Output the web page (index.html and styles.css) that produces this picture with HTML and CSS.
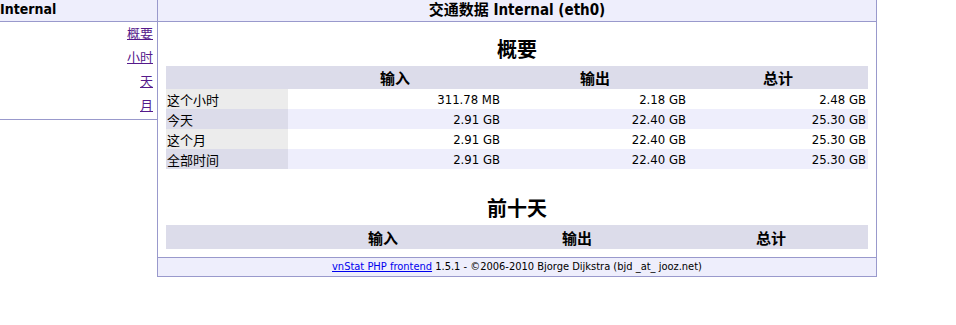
FILE: index.html
```
<!DOCTYPE html>
<html lang="zh-CN">
<head>
  <meta charset="UTF-8" />
  <title>vnStat - 交通数据 Internal (eth0)</title>
  <link rel="stylesheet" href="styles.css">
</head>
<body>
  <div id="wrap">
    <div id="sidebar">
      <div class="iface">Internal</div>
      <ul class="nav">
        <li><a href="#">概要</a></li>
        <li><a href="#">小时</a></li>
        <li><a href="#">天</a></li>
        <li><a href="#">月</a></li>
      </ul>
    </div>

    <div id="main">
      <div class="title">交通数据 Internal (eth0)</div>

      <div class="content">
        <h2>概要</h2>
        <table class="summary">
          <tr>
            <th class="corner"></th>
            <th class="c1">输入</th>
            <th class="c2">输出</th>
            <th class="c3">总计</th>
          </tr>
          <tr class="odd">
            <td class="label">这个小时</td>
            <td class="num">311.78 MB</td>
            <td class="num">2.18 GB</td>
            <td class="num">2.48 GB</td>
          </tr>
          <tr class="even">
            <td class="label">今天</td>
            <td class="num">2.91 GB</td>
            <td class="num">22.40 GB</td>
            <td class="num">25.30 GB</td>
          </tr>
          <tr class="odd">
            <td class="label">这个月</td>
            <td class="num">2.91 GB</td>
            <td class="num">22.40 GB</td>
            <td class="num">25.30 GB</td>
          </tr>
          <tr class="even">
            <td class="label">全部时间</td>
            <td class="num">2.91 GB</td>
            <td class="num">22.40 GB</td>
            <td class="num">25.30 GB</td>
          </tr>
        </table>

        <h2 class="second">前十天</h2>
        <table class="topten">
          <tr>
            <th class="corner"></th>
            <th>输入</th>
            <th>输出</th>
            <th>总计</th>
          </tr>
        </table>
      </div>

      <div class="footer">
        <a href="#">vnStat PHP frontend</a> 1.5.1 - &copy;2006-2010 Bjorge Dijkstra (bjd _at_ jooz.net)
      </div>
    </div>
  </div>
</body>
</html>
```

FILE: styles.css
```
body {
  margin: 0;
  background-color: #fff;
  color: #000;
  font-family: "DejaVu Sans Condensed", "DejaVu Sans", "Noto Sans CJK SC", sans-serif;
  font-stretch: condensed;
  font-size: 13px;
}

#wrap {
  display: flex;
  align-items: flex-start;
}

#sidebar {
  width: 157px;
  border-bottom: 1px solid #9999cc;
}

.iface {
  height: 21px;
  line-height: 19px;
  background-color: #eeeefc;
  border-bottom: 1px solid #9999cc;
  font-size: 14px;
  font-weight: bold;
}

.nav {
  list-style: none;
  margin: 0;
  padding: 0 4px 1px 0;
  text-align: right;
}

.nav li {
  height: 24px;
  line-height: 23px;
}

.nav a {
  color: #551a8b;
}

#main {
  width: 718px;
  border-left: 1px solid #9999cc;
  border-right: 1px solid #9999cc;
  border-bottom: 1px solid #9999cc;
}

.title {
  height: 21px;
  line-height: 20px;
  background-color: #eeeefc;
  border-bottom: 1px solid #9999cc;
  text-align: center;
  font-size: 15px;
  font-weight: bold;
}

.content {
  padding: 0 8px 8px 8px;
}

h2 {
  margin: 14px 0 0 0;
  height: 30px;
  line-height: 28px;
  font-size: 20px;
  text-align: center;
}

h2.second {
  margin-top: 26px;
}

table {
  width: 702px;
  border-collapse: collapse;
  table-layout: fixed;
}

th {
  background-color: #dcdcea;
  height: 23px;
  padding: 0;
  font-size: 15px;
  text-align: center;
}

.summary .corner { width: 122px; }
.summary .c1 { width: 214px; }
.summary .c2 { width: 186px; }
.summary .c3 { width: 180px; }

.topten th {
  height: 24px;
  width: 194px;
}

.topten .corner { width: 120px; }

td {
  height: 20px;
  padding: 0 2px 0 1px;
}

td.num {
  text-align: right;
}

tr.odd td.label {
  background-color: #ececec;
}

tr.even td {
  background-color: #eeeefc;
}

tr.even td.label {
  background-color: #dcdcea;
}

.footer {
  height: 18px;
  line-height: 18px;
  background-color: #eeeefc;
  border-top: 1px solid #9999cc;
  text-align: center;
  font-size: 11px;
}

.footer a {
  color: #0000ee;
}
```
